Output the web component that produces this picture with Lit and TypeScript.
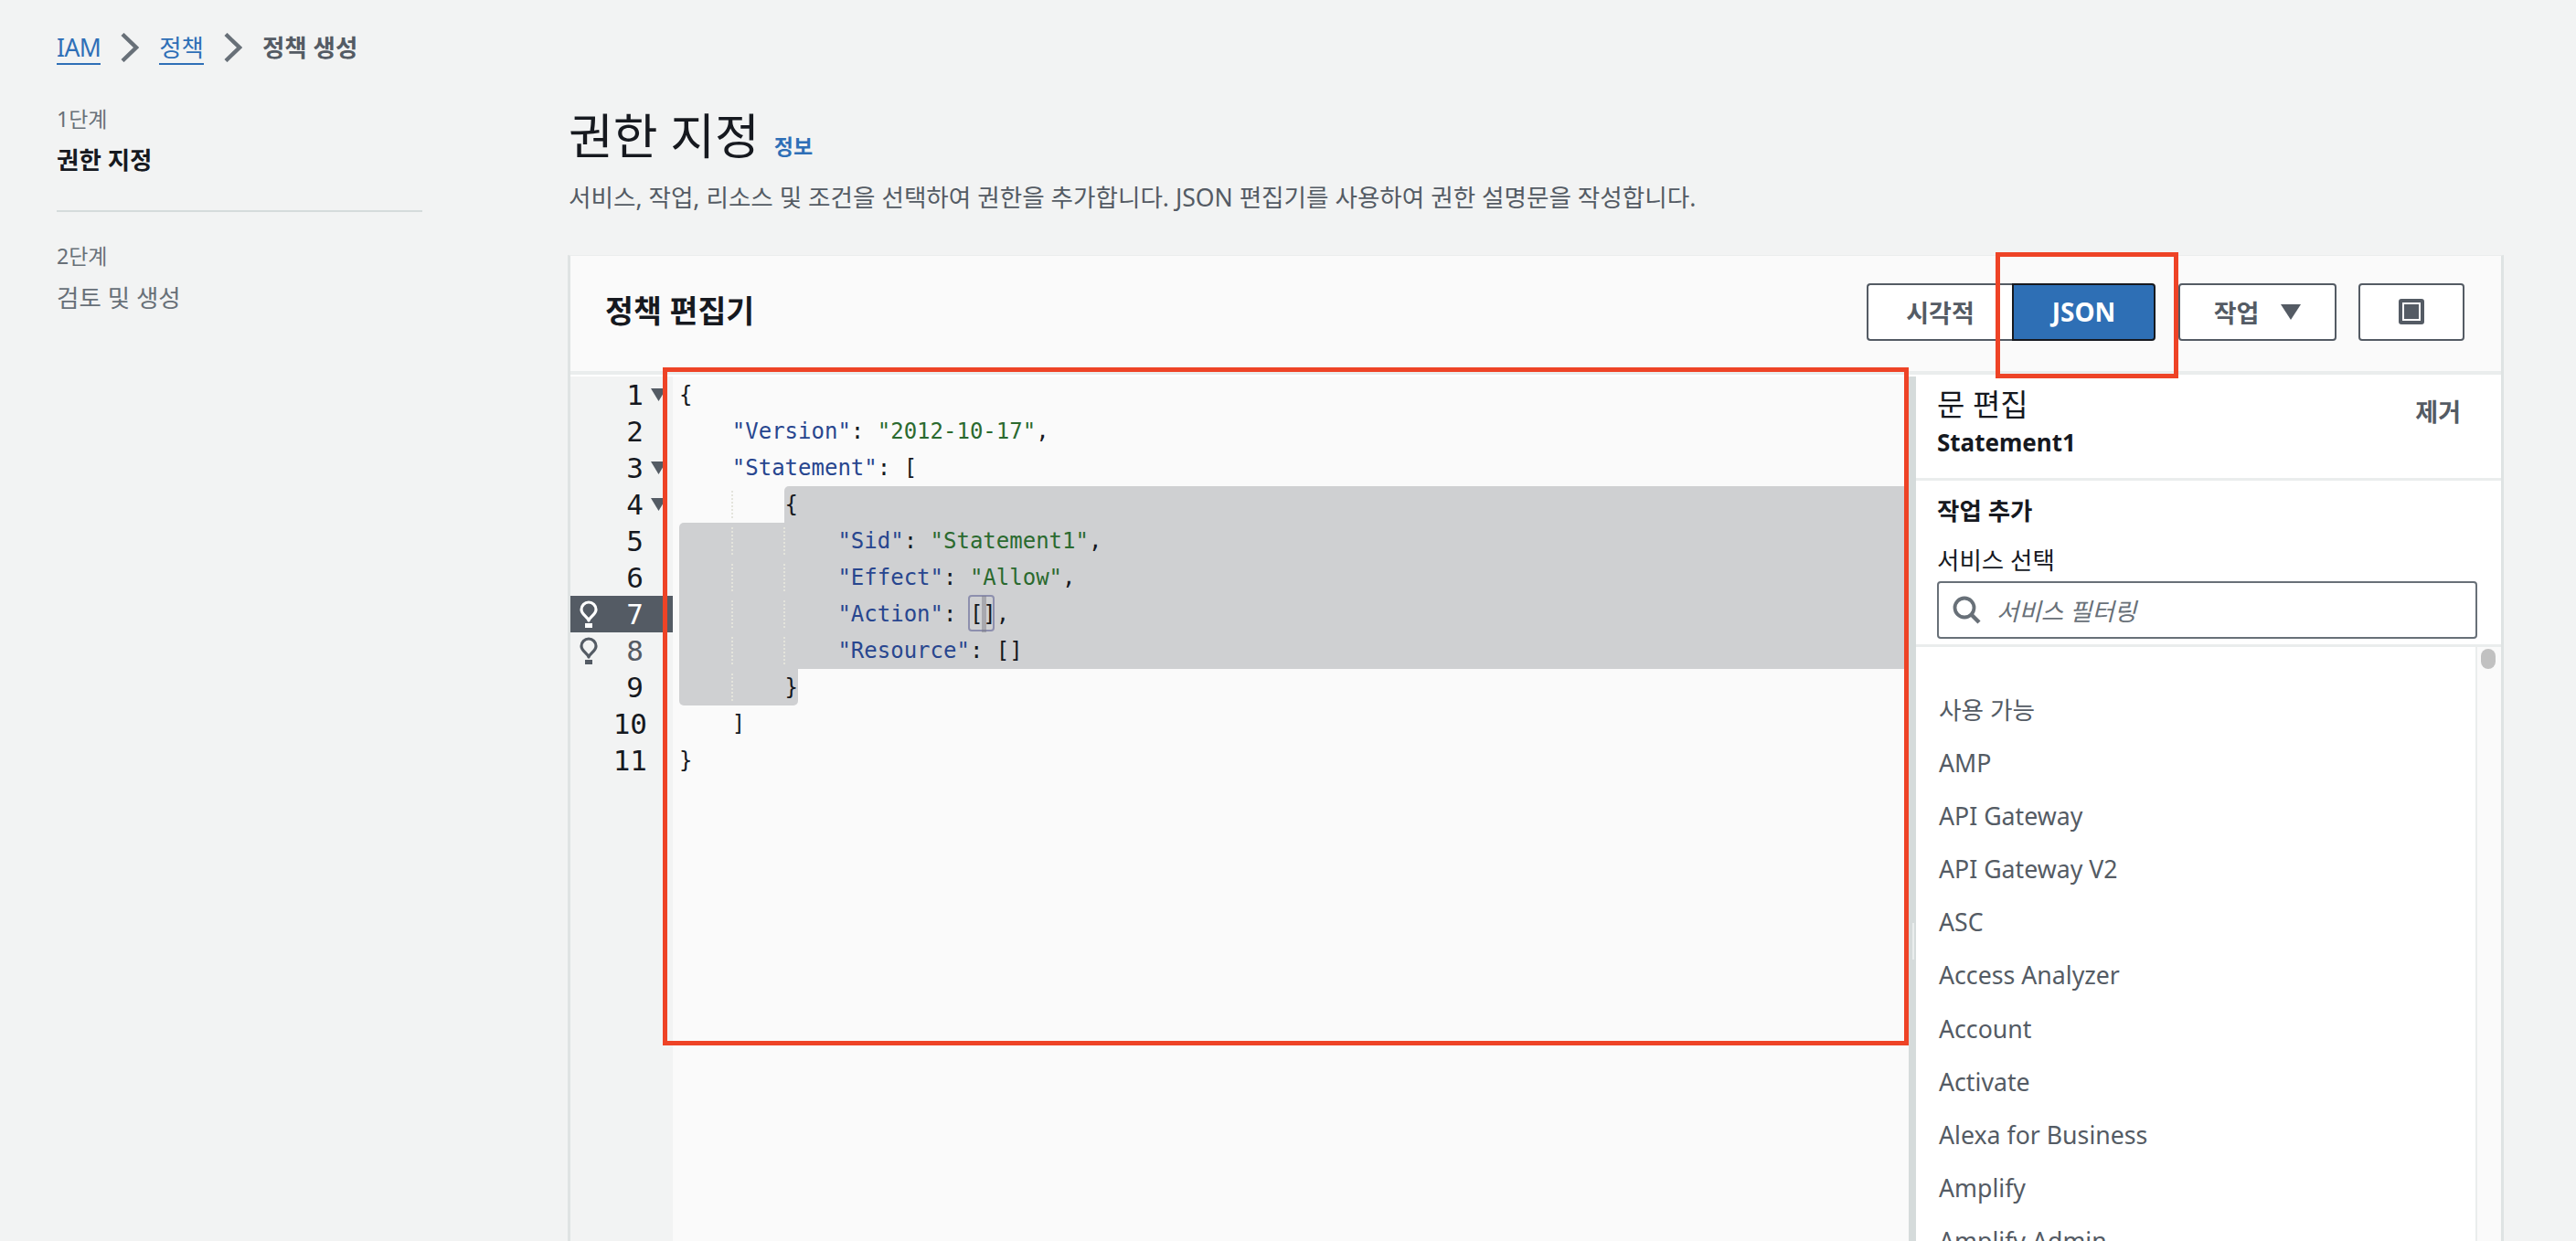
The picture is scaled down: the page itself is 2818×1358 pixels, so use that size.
import { LitElement, html, css, svg } from "lit";
import { customElement } from "lit/decorators.js";

const k = (t: string) => html`<span class="key">${t}</span>`;
const s = (t: string) => html`<span class="str">${t}</span>`;
const services = ["AMP","API Gateway","API Gateway V2","ASC","Access Analyzer","Account","Activate","Alexa for Business","Amplify","Amplify Admin"];

const bulb = svg`<svg class="bulb" viewBox="0 0 20 30" width="20" height="30"><path d="M10 22 C8.5 17.5 2 15.5 2 10 A8 8 0 0 1 18 10 C18 15.5 11.5 17.5 10 22 Z" fill="none" stroke="currentColor" stroke-width="3.2" stroke-linejoin="round"/><rect x="6" y="25" width="8" height="5" fill="currentColor"/></svg>`;
const chev = html`<svg class="chev" viewBox="0 0 20 32" width="20" height="32"><path d="M2 1.5 L17 16 L2 30.5" fill="none" stroke="#687078" stroke-width="4.4"/></svg>`;

@customElement("app-root")
export class AppRoot extends LitElement {
  static styles = css`
    :host { display:block; position:relative; width:2818px; height:1358px; overflow:hidden; background:#f2f3f3; color:#16191f;
      font-family:"Noto Sans","Noto Sans CJK KR",sans-serif; }
    * { box-sizing:border-box; }
    .crumbs { display:flex; align-items:center; height:38px; margin:33px 0 0 62px; font-size:26.5px; line-height:38px; }
    .crumbs a { color:#2e6fb7; border-bottom:2px solid #2e6fb7; height:38px; }
    .crumbs a.en { letter-spacing:-.6px; }
    .crumbs .cur { color:#545b64; font-weight:600; }
    .chev { margin:0 22px; }
    .layout { display:flex; }
    nav { width:400px; margin:42px 159px 0 62px; }
    .step { font-size:23px; line-height:34px; color:#687078; }
    .stepname { font-size:26.5px; line-height:38px; margin-top:9px; font-weight:700; }
    .stepname.off { font-weight:400; color:#687078; margin-top:10px; }
    nav hr { border:0; height:2px; background:#d5dbdb; margin:36px 0 31px; }
    main { width:2118px; }
    .head { display:flex; align-items:baseline; margin-top:44px; height:68px; padding-left:1px; }
    h1 { margin:0; font-size:53px; font-weight:400; line-height:68px; }
    .info { font-size:23px; color:#2e6fb7; font-weight:600; margin-left:16px; }
    .desc { font-size:26.6px; line-height:38px; color:#545b64; margin-top:14px; white-space:nowrap; padding-left:1px; }
    .panel { margin-top:44px; height:1100px; background:#fafafa; border-left:3px solid #dfe3e3; border-right:3px solid #dfe3e3; border-top:1px solid #eaeded; }
    .phead { display:flex; align-items:center; height:130px; padding:0 40px 4px 38px; border-bottom:4px solid #eaeded; }
    h2 { margin:-5px 0 0; flex:1; font-size:33.6px; font-weight:700; }
    .btn { display:flex; align-items:center; justify-content:center; height:63px; background:#fff; border:2px solid #545b64; border-radius:4px; color:#545b64; font-size:27px; font-weight:600; }
    .vis { width:159px; border-right:0; border-radius:4px 0 0 4px; }
    .json { width:157px; background:#2e6fb5; border-color:#16191f; color:#fff; font-weight:700; font-size:28px; margin-right:25px; border-radius:0 4px 4px 0; }
    .act { width:173px; margin-right:24px; gap:24px; }
    .full { width:116px; }
    .body { display:flex; height:100%; border-top:2px solid #fff; }
    .gutter { width:112px; flex:none; background:#f2f3f3; font:31px/40px "DejaVu Sans Mono",monospace; }
    .gl { position:relative; height:40px; text-align:right; padding-right:32px; }
    .gl.wide { padding-right:28px; }
    .gl.hi { background:#545b64; color:#fff; }
    .gl.dim { color:#545b64; }
    .gl .bulb { position:absolute; left:10px; top:5px; }
    .gl .fold { position:absolute; left:88px; top:13px; }
    .code { position:relative; width:1352px; flex:none; background:#fafafa; font:24px/40px "DejaVu Sans Mono",monospace; padding-left:7px; }
    .sel { position:absolute; background:#cfd0d2; }
    .line { position:relative; height:40px; white-space:pre; }
    .guide { position:absolute; border-left:2px dotted #e4e4dc; width:0; height:30px; }
    .key { color:#28468f; } .str { color:#2b6a2f; }
    .bm { position:absolute; left:323px; top:239px; width:29px; height:40px; border:2px solid #8d8fae; border-radius:4px; }
    .cursor { position:absolute; left:338px; top:240px; width:5px; height:40px; background:rgba(120,120,130,.45); }
    .split { width:8px; flex:none; background:#d5dbdb; position:relative; }
    .grip { position:absolute; left:4px; top:598px; width:2px; height:40px; background:#eaeded; }
    .side { flex:1; background:#fff; }
    .shead { position:relative; height:114px; padding:9px 0 0 23px; border-bottom:3px solid #eaeded; }
    .t1 { font-size:33px; line-height:44px; }
    .t2 { font-size:26px; line-height:34px; font-weight:700; margin-top:2px; }
    .rm { position:absolute; right:44px; top:18px; font-size:27px; font-weight:600; color:#545b64; }
    .filter { height:182px; padding:14px 23px 0 23px; border-bottom:3px solid #eaeded; }
    .t3 { font-size:26.5px; line-height:38px; font-weight:700; }
    .t4 { font-size:26.5px; line-height:38px; margin-top:16px; }
    .input { display:flex; align-items:center; height:63px; margin-top:4px; border:2px solid #687078; border-radius:4px; padding-left:15px; gap:17px; color:#687078; font-size:26.5px; font-style:italic; width:591px; }
    .lists { display:flex; height:700px; }
    .list { flex:1; padding:40px 0 0 25px; color:#545b64; font-size:26.7px; }
    .list div { height:58.1px; line-height:58.1px; white-space:nowrap; }
    .track { width:28px; flex:none; background:#fafafa; border-left:2px solid #eaeded; padding:2px 4px 0 4px; }
    .thumb { width:16px; height:22px; border-radius:8px; background:#c1c1c1; }
    .mark { position:absolute; border:5px solid #ee4326; pointer-events:none; }
    .m1 { left:2183px; top:276px; width:200px; height:138px; }
    .m2 { left:725px; top:402px; width:1363px; height:742px; }
  `;

  render() {
    const gut = [1,2,3,4,5,6,7,8,9,10,11];
    const guides = [[64,3],[64,4],[64,5],[64,6],[64,7],[64,8],[121,4],[121,5],[121,6],[121,7]];
    return html`
      <div class="crumbs"><a class="en">IAM</a>${chev}<a>정책</a>${chev}<span class="cur">정책 생성</span></div>
      <div class="layout">
        <nav>
          <div class="step">1단계</div>
          <div class="stepname">권한 지정</div>
          <hr />
          <div class="step">2단계</div>
          <div class="stepname off">검토 및 생성</div>
        </nav>
        <main>
          <div class="head"><h1>권한 지정</h1><span class="info">정보</span></div>
          <div class="desc">서비스, 작업, 리소스 및 조건을 선택하여 권한을 추가합니다. JSON 편집기를 사용하여 권한 설명문을 작성합니다.</div>
          <section class="panel">
            <div class="phead">
              <h2>정책 편집기</h2>
              <div class="btn vis">시각적</div>
              <div class="btn json">JSON</div>
              <div class="btn act">작업
                <svg width="22" height="17" viewBox="0 0 22 17"><path d="M0 0 H22 L11 17 Z" fill="#545b64"/></svg>
              </div>
              <div class="btn full">
                <svg width="28" height="28" viewBox="0 0 28 28"><rect width="28" height="28" rx="3" fill="#545b64"/><rect x="4" y="4" width="20" height="20" fill="#fff"/><rect x="6" y="6" width="16" height="16" fill="#545b64"/></svg>
              </div>
            </div>
            <div class="body">
              <div class="gutter">
                ${gut.map(n => html`<div class="gl ${n>9?"wide":""} ${n===7?"hi":""} ${n===8?"dim":""}">${n===7||n===8?bulb:""}${n}${n===1||n===3||n===4?html`<svg class="fold" width="17" height="14" viewBox="0 0 17 14"><path d="M0 0 H17 L8.5 14 Z" fill="#545b64"/></svg>`:""}</div>`)}
              </div>
              <div class="code">
                <div class="sel" style="left:122px;top:120px;right:0;height:40px;border-radius:5px 0 0 0"></div>
                <div class="sel" style="left:7px;top:160px;right:0;height:160px;border-radius:5px 0 0 0"></div>
                <div class="sel" style="left:7px;top:320px;width:130px;height:40px;border-radius:0 0 5px 5px"></div>
                ${guides.map(([x,l]) => html`<div class="guide" style="left:${x}px;top:${l*40+5}px"></div>`)}
                <div class="bm"></div><div class="cursor"></div>
                <div class="line">{</div>
                <div class="line">    ${k('"Version"')}: ${s('"2012-10-17"')},</div>
                <div class="line">    ${k('"Statement"')}: [</div>
                <div class="line">        {</div>
                <div class="line">            ${k('"Sid"')}: ${s('"Statement1"')},</div>
                <div class="line">            ${k('"Effect"')}: ${s('"Allow"')},</div>
                <div class="line">            ${k('"Action"')}: [],</div>
                <div class="line">            ${k('"Resource"')}: []</div>
                <div class="line">        }</div>
                <div class="line">    ]</div>
                <div class="line">}</div>
              </div>
              <div class="split"><div class="grip"></div></div>
              <aside class="side">
                <div class="shead">
                  <div class="t1">문 편집</div>
                  <div class="t2">Statement1</div>
                  <div class="rm">제거</div>
                </div>
                <div class="filter">
                  <div class="t3">작업 추가</div>
                  <div class="t4">서비스 선택</div>
                  <div class="input">
                    <svg width="31" height="31" viewBox="0 0 31 31"><circle cx="13" cy="13" r="10.5" fill="none" stroke="#687078" stroke-width="3.8"/><path d="M20.5 20.5 L29 29" stroke="#687078" stroke-width="4.4" fill="none"/></svg>
                    <span>서비스 필터링</span>
                  </div>
                </div>
                <div class="lists">
                  <div class="list">
                    <div class="hd">사용 가능</div>
                    ${services.map(x => html`<div>${x}</div>`)}
                  </div>
                  <div class="track"><div class="thumb"></div></div>
                </div>
              </aside>
            </div>
          </section>
        </main>
      </div>
      <div class="mark m1"></div>
      <div class="mark m2"></div>
    `;
  }
}
